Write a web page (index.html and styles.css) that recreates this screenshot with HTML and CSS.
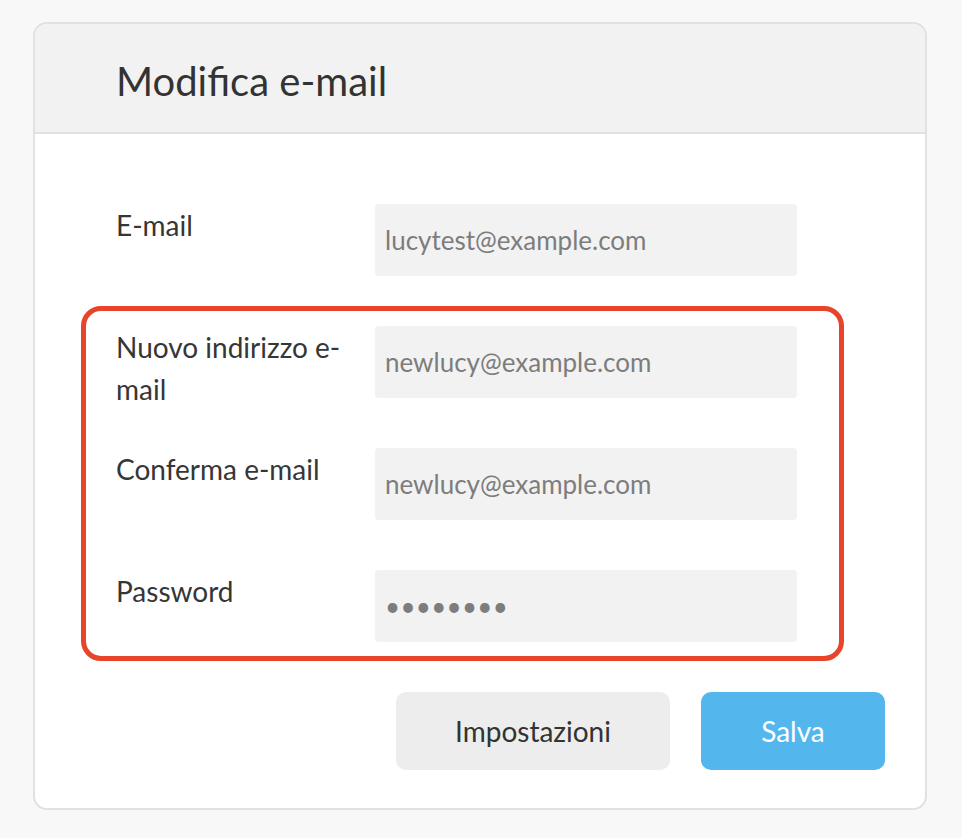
FILE: index.html
```html
<!DOCTYPE html>
<html lang="it">
<head>
<meta charset="utf-8">
<title>Modifica e-mail</title>
<link rel="stylesheet" href="styles.css">
</head>
<body>
<div class="card">
  <div class="card-header">
    <h1 class="title">Modifica e-mail</h1>
  </div>
  <div class="card-body">
    <div class="row">
      <label class="label" for="cur">E-mail</label>
      <input class="field" id="cur" type="text" value="lucytest@example.com">
    </div>
    <div class="highlight">
      <div class="row">
        <label class="label" for="new">Nuovo indirizzo e-mail</label>
        <input class="field" id="new" type="text" value="newlucy@example.com">
      </div>
      <div class="row">
        <label class="label" for="conf">Conferma e-mail</label>
        <input class="field" id="conf" type="text" value="newlucy@example.com">
      </div>
      <div class="row">
        <label class="label" for="pw">Password</label>
        <input class="field field-pw" id="pw" type="password" value="12345678">
      </div>
    </div>
    <div class="actions">
      <button class="btn btn-secondary" type="button">Impostazioni</button>
      <button class="btn btn-primary" type="button">Salva</button>
    </div>
  </div>
</div>
</body>
</html>
```
FILE: styles.css
```css
html, body {
  margin: 0;
  padding: 0;
}
body {
  background: #f8f8f8;
  font-family: Lato, "Open Sans", "Liberation Sans", sans-serif;
  color: #363636;
  padding: 22px 0 0 33px;
}
.card {
  width: 894px;
  box-sizing: border-box;
  background: #ffffff;
  border: 2px solid #e1e1e1;
  border-radius: 14px;
  overflow: hidden;
}
.card-header {
  background: #f2f2f2;
  border-bottom: 2px solid #e1e1e1;
  padding: 33px 80px 27px 81px;
}
.title {
  margin: 0;
  font-size: 40px;
  line-height: 48px;
  font-weight: 400;
  color: #333333;
}
.card-body {
  padding: 70px 40px 38px 81px;
  display: flex;
  flex-direction: column;
}
.row {
  display: grid;
  grid-template-columns: 259px 422px;
  grid-template-rows: 72px;
  align-items: start;
}
.row + .row {
  margin-top: 50px;
}
.label {
  font-size: 28px;
  line-height: 42px;
  padding-right: 20px;
  color: #363636;
}
.field {
  box-sizing: border-box;
  width: 422px;
  height: 72px;
  border: none;
  outline: none;
  background: #f2f2f2;
  border-radius: 4px;
  padding: 0 10px;
  font-family: Lato, "Open Sans", "Liberation Sans", sans-serif;
  font-size: 26px;
  color: #7d7d7d;
}
.field-pw {
  letter-spacing: 0.3px;
}
.highlight {
  align-self: flex-start;
  margin: 30px 0 0 -35px;
  padding: 15px 42px 14px 30px;
  border: 5px solid #e8442a;
  border-radius: 20px;
}
.actions {
  display: flex;
  justify-content: flex-end;
  gap: 31px;
  margin-top: 31px;
}
.btn {
  height: 78px;
  border: none;
  border-radius: 10px;
  font-family: Lato, "Open Sans", "Liberation Sans", sans-serif;
  font-size: 28px;
  padding: 0;
}
.btn-secondary {
  width: 274px;
  background: #ededed;
  color: #333333;
}
.btn-primary {
  width: 184px;
  background: #53b7ee;
  color: #ffffff;
}
```
